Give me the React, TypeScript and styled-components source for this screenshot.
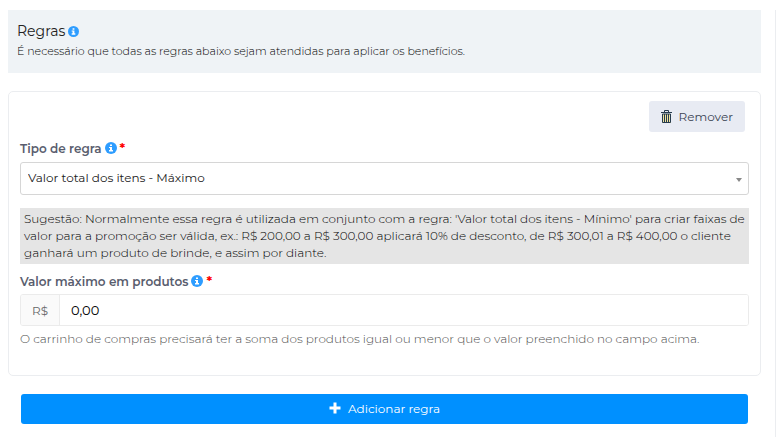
import React from "react";
import styled, { createGlobalStyle } from "styled-components";

const GlobalStyle = createGlobalStyle`
  *, *::before, *::after { box-sizing: border-box; }
  body { margin: 0; background: #fff; color: #000; }
  body, button, input, select {
    font-family: Montserrat, Inter, sans-serif;
    font-size: 12px;
    font-weight: 300;
  }
`;

const Page = styled.main`
  margin: 10px 8px 0;
  padding: 0 14px 13px 0;
  border-right: 1px solid #ebedf0;
`;

const Intro = styled.header`
  padding: 12px 9px 13px;
  background: #eff3f6;
`;

const Title = styled.h1`
  display: flex;
  align-items: center;
  gap: 3px;
  margin: 0 0 2px;
  color: #222;
  font-size: 14px;
  font-weight: 400;
  line-height: 18px;
`;

const IntroText = styled.p`
  margin: 0;
  font-size: 11px;
  line-height: 18px;
`;

const RuleCard = styled.section`
  margin-top: 18px;
  padding: 9px 11px 27px;
  border: 1px solid #ebedf0;
  border-radius: 5px;
`;

const CardActions = styled.div`
  display: flex;
  justify-content: flex-end;
  padding-right: 4px;
  margin-bottom: 8px;
`;

const RemoveButton = styled.button`
  display: flex;
  align-items: center;
  gap: 7px;
  height: 31px;
  padding: 0 12px;
  border: 0;
  border-radius: 3px;
  background: #e8ebf3;
  color: #3b4554;
  font-weight: 400;
  cursor: pointer;
`;

const FieldHead = styled.div`
  display: flex;
  align-items: center;
  gap: 3px;
  height: 16px;
`;

const Label = styled.label`
  color: #595d6e;
  font-size: 12px;
  font-weight: 600;
`;

const Required = styled.span`
  color: #f00;
  font-size: 13px;
  font-weight: 700;
`;

const SelectWrap = styled.div`
  position: relative;
  margin-top: 6px;
`;

const Select = styled.select`
  display: block;
  width: 100%;
  height: 33px;
  padding: 0 24px 2px 7px;
  border: 1px solid #d6d6d6;
  border-radius: 3px;
  background: #fff;
  color: #222;
  font-weight: 400;
  appearance: none;
`;

const Arrow = styled.svg`
  position: absolute;
  top: 16px;
  right: 7px;
  pointer-events: none;
`;

const Hint = styled.p`
  margin: 13px 0 9px;
  padding: 2px 4px 3px;
  background: #e5e5e5;
  line-height: 17px;
`;

const MoneyGroup = styled.div`
  display: flex;
  height: 32px;
  margin-top: 5px;
  border: 1px solid #ebebeb;
  border-radius: 3px;
  overflow: hidden;
`;

const Currency = styled.span`
  display: flex;
  align-items: center;
  justify-content: center;
  width: 39px;
  border-right: 1px solid #ebebeb;
  background: #fafafa;
  color: #666;
  font-weight: 400;
`;

const MoneyInput = styled.input`
  flex: 1;
  min-width: 0;
  padding: 0 11px;
  border: 0;
  color: #000;
  font-size: 13px;
  font-weight: 400;
`;

const Help = styled.p`
  margin: 4px 0 0;
  color: #4d4d4d;
  line-height: 18px;
`;

const AddButton = styled.button`
  display: flex;
  align-items: center;
  justify-content: center;
  gap: 7px;
  width: calc(100% - 26px);
  height: 30px;
  margin: 18px 13px 0;
  padding: 0 0 2px;
  border: 0;
  border-radius: 3px;
  background: #0090ff;
  color: #fff;
  font-weight: 400;
  cursor: pointer;
`;

const InfoIcon = ({ size = 12 }: { size?: number }) => (
  <svg width={size} height={size} viewBox="0 0 12 12" aria-hidden="true">
    <circle cx="6" cy="6" r="6" fill="#2e9dff" />
    <path d="M5 2.500h2v1.500H5zM4 5h3v3h1v1.500H4V8h1V6H4z" fill="#fff" />
  </svg>
);

const TrashIcon = () => (
  <svg width="11" height="14" viewBox="0 0 11 14" aria-hidden="true">
    <path d="M1 4h9v9H1z" fill="#efe3a0" />
    <path
      d="M3.500 2V.5h4V2M0 2.500h11M1.500 4v8.500h8V4zM3.500 4v8M5.500 4v8M7.500 4v8"
      fill="none"
      stroke="#263b4d"
    />
  </svg>
);

const PlusIcon = () => (
  <svg width="12" height="12" viewBox="0 0 12 12" aria-hidden="true">
    <path d="M4.500 0.500h3v4h4v3h-4v4h-3v-4h-4v-3h4z" fill="#fff" />
  </svg>
);

export default function App() {
  return (
    <>
      <GlobalStyle />
      <Page>
        <Intro>
          <Title>
            Regras <InfoIcon size={11} />
          </Title>
          <IntroText>
            É necessário que todas as regras abaixo sejam atendidas para aplicar os benefícios.
          </IntroText>
        </Intro>
        <RuleCard>
          <CardActions>
            <RemoveButton type="button">
              <TrashIcon />
              Remover
            </RemoveButton>
          </CardActions>
          <FieldHead>
            <Label htmlFor="rule-type">Tipo de regra</Label>
            <InfoIcon />
            <Required>*</Required>
          </FieldHead>
          <SelectWrap>
            <Select id="rule-type" defaultValue="max">
              <option value="max">Valor total dos itens - Máximo</option>
              <option value="min">Valor total dos itens - Mínimo</option>
            </Select>
            <Arrow width="6" height="4" viewBox="0 0 6 4" aria-hidden="true">
              <path d="M0 0h6L3 4z" fill="#888" />
            </Arrow>
          </SelectWrap>
          <Hint>
            Sugestão: Normalmente essa regra é utilizada em conjunto com a regra: 'Valor total dos
            itens - Mínimo' para criar faixas de valor para a promoção ser válida, ex.: R$ 200,00 a
            R$ 300,00 aplicará 10% de desconto, de R$ 300,01 a R$ 400,00 o cliente ganhará um
            produto de brinde, e assim por diante.
          </Hint>
          <FieldHead>
            <Label htmlFor="max-value">Valor máximo em produtos</Label>
            <InfoIcon />
            <Required>*</Required>
          </FieldHead>
          <MoneyGroup>
            <Currency>R$</Currency>
            <MoneyInput id="max-value" type="text" inputMode="decimal" defaultValue="0,00" />
          </MoneyGroup>
          <Help>
            O carrinho de compras precisará ter a soma dos produtos igual ou menor que o valor
            preenchido no campo acima.
          </Help>
        </RuleCard>
        <AddButton type="button">
          <PlusIcon />
          Adicionar regra
        </AddButton>
      </Page>
    </>
  );
}
